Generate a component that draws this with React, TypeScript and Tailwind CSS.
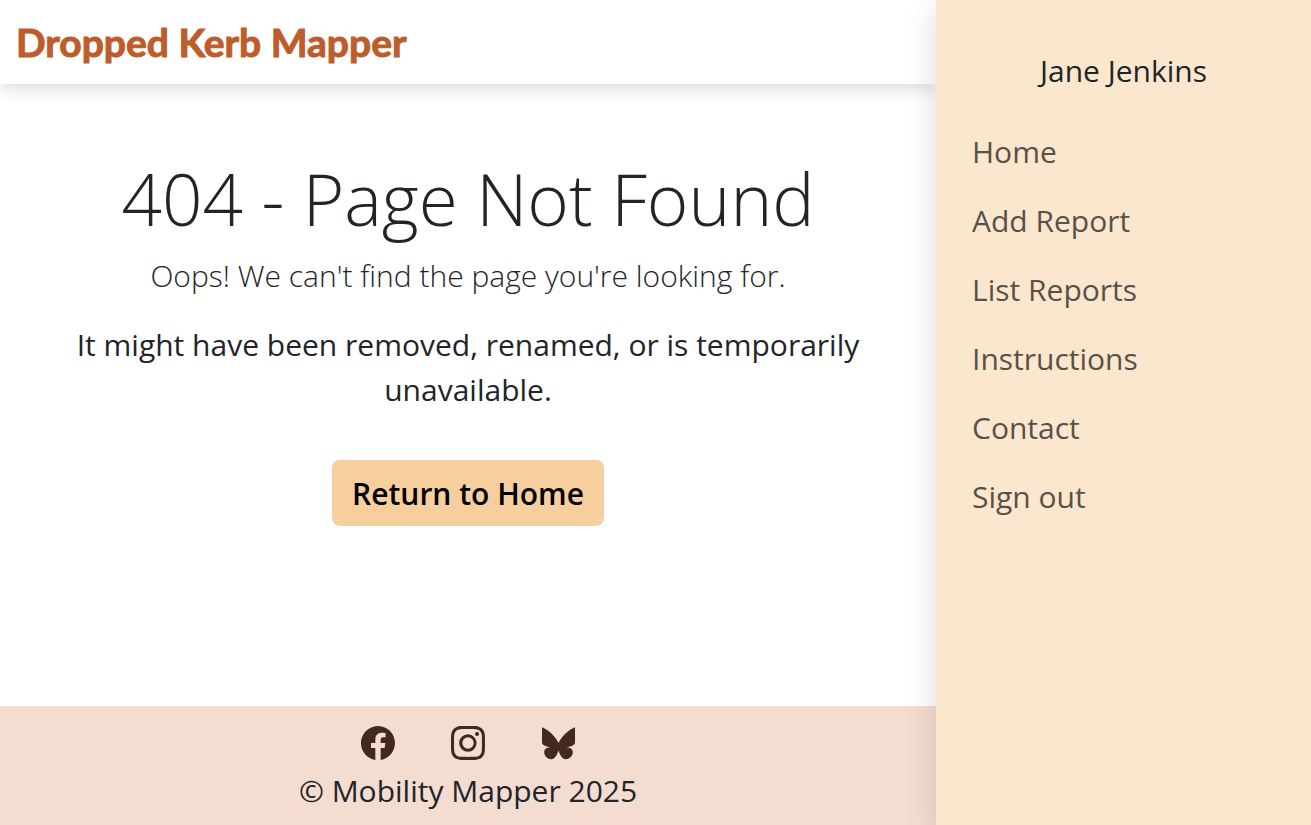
import { BsFacebook, BsInstagram } from "react-icons/bs";

const links = ["Home", "Add Report", "List Reports", "Instructions", "Contact", "Sign out"];

function Butterfly({ className }: { className?: string }) {
  return (
    <svg viewBox="0 0 34 34" fill="currentColor" className={className} aria-hidden="true">
      <path d="M1 1.200C8 4 14.500 10.500 17.500 17C20.500 10.500 27 4 34 1.200V17C33 19.500 29.500 20.800 25.500 21.200C30 21.400 31.800 23.500 31.800 26C31.800 30.500 28 33.200 24.800 33.200C21 33.200 18.700 28.500 17.500 24.500C16.300 28.500 14 33.200 10.200 33.200C7 33.200 3.200 30.500 3.200 26C3.200 23.500 5 21.400 9.500 21.200C5.500 20.800 2 19.500 1 17Z" />
    </svg>
  );
}

const socials = [
  { label: "Facebook", Icon: BsFacebook },
  { label: "Instagram", Icon: BsInstagram },
  { label: "Bluesky", Icon: Butterfly },
];

export default function App() {
  return (
    <div className="flex min-h-screen bg-white font-['Open_Sans',sans-serif] text-[30px] leading-[45px] text-[#212529]">
      <div className="flex min-w-0 flex-1 flex-col">
        <header className="px-4 py-[14px] shadow-[0_4px_16px_rgba(0,0,0,0.15)]">
          <a
            href="#"
            className="block font-['Lato',sans-serif] text-[39px] leading-14 font-bold text-[#be5c2b] [-webkit-text-stroke:1px_#be5c2b]"
          >
            Dropped Kerb Mapper
          </a>
        </header>
        <main className="flex flex-1 flex-col items-center px-6 pt-18 text-center">
          <h1 className="text-[71px] leading-[85px] font-light">404 - Page Not Found</h1>
          <p className="mt-3 font-light">Oops! We can't find the page you're looking for.</p>
          <p className="mt-6 max-w-[840px]">
            It might have been removed, renamed, or is temporarily unavailable.
          </p>
          <a
            href="#"
            className="mt-12 rounded-lg bg-[#f7cf9e] px-5 pt-[11px] pb-[10px] font-semibold text-black"
          >
            Return to Home
          </a>
        </main>
        <footer className="flex flex-col items-center bg-[#f5dcd1] pt-5 pb-3">
          <div className="flex gap-14 text-[#43281f]">
            {socials.map(({ label, Icon }) => (
              <a key={label} href="#" aria-label={label}>
                <Icon className="size-[34px]" />
              </a>
            ))}
          </div>
          <p className="mt-2">© Mobility Mapper 2025</p>
        </footer>
      </div>
      <aside className="relative w-[375px] shrink-0 bg-[#fbe7ce] px-9 pt-12 shadow-[0_8px_30px_rgba(0,0,0,0.15)]">
        <p className="text-center">Jane Jenkins</p>
        <nav className="mt-9 flex flex-col gap-6 text-[#595149]">
          {links.map((link) => (
            <a key={link} href="#">
              {link}
            </a>
          ))}
        </nav>
      </aside>
    </div>
  );
}
